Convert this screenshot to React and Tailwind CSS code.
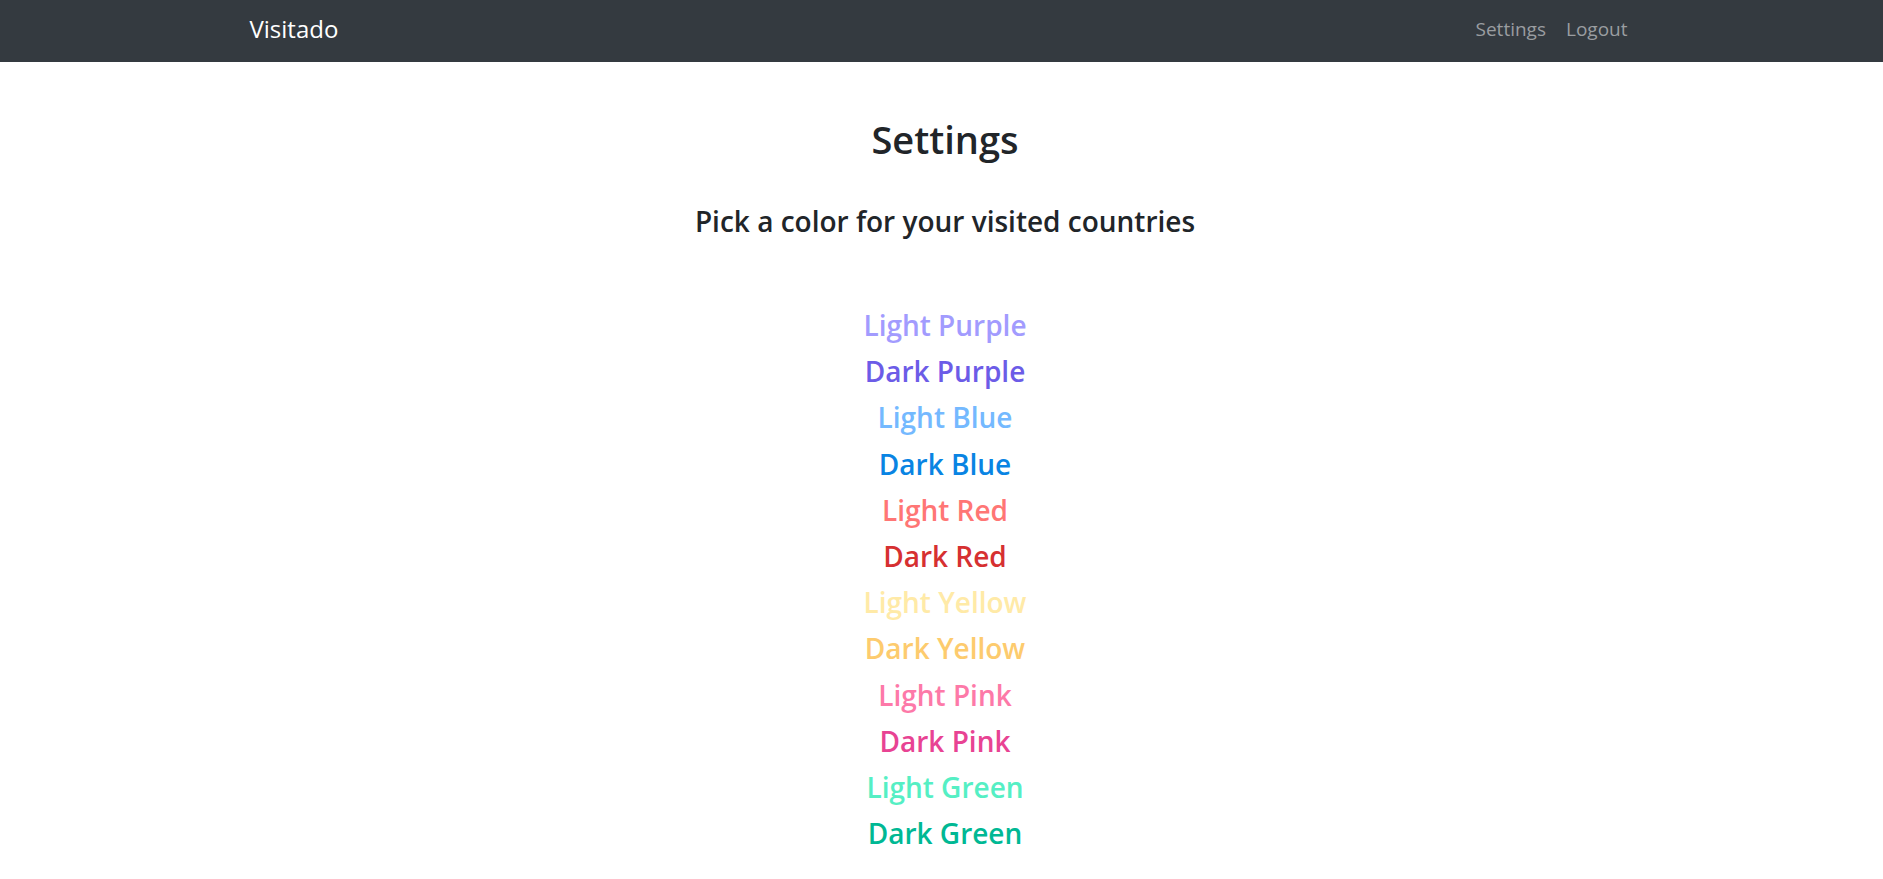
import React from "react";

const colors = [
  { name: "Light Purple", cls: "text-[#a29bfe]" },
  { name: "Dark Purple", cls: "text-[#6c5ce7]" },
  { name: "Light Blue", cls: "text-[#74b9ff]" },
  { name: "Dark Blue", cls: "text-[#0984e3]" },
  { name: "Light Red", cls: "text-[#ff7675]" },
  { name: "Dark Red", cls: "text-[#d63031]" },
  { name: "Light Yellow", cls: "text-[#ffeaa7]" },
  { name: "Dark Yellow", cls: "text-[#fdcb6e]" },
  { name: "Light Pink", cls: "text-[#fd79a8]" },
  { name: "Dark Pink", cls: "text-[#e84393]" },
  { name: "Light Green", cls: "text-[#55efc4]" },
  { name: "Dark Green", cls: "text-[#00b894]" },
];

export default function App() {
  return (
    <div className="min-h-screen bg-white font-['Open_Sans',_'Noto_Sans',_sans-serif] text-[#212529]">
      <nav className="h-[62px] bg-[#343a40]">
        <div className="mx-auto flex h-full w-[1386px] items-center justify-between pb-[5px]">
          <a className="ml-[1px] text-[24px] leading-[30px] text-white">Visitado</a>
          <div className="flex items-center">
            <a className="px-[10px] text-[19px] leading-[28px] text-[#9a9da0]">Settings</a>
            <a className="pl-[10px] pr-[7px] text-[19px] leading-[28px] text-[#9a9da0]">Logout</a>
          </div>
        </div>
      </nav>
      <main className="flex flex-col items-center pl-[7px] pt-[53px] text-center">
        <h1 className="text-[38px] font-semibold leading-[48px]">Settings</h1>
        <h4 className="mt-[40px] text-[28px] font-semibold leading-[36px]">
          Pick a color for your visited countries
        </h4>
        <ul className="mt-[63px] flex flex-col items-center">
          {colors.map((c) => (
            <li key={c.name}>
              <button className={`text-[28px] font-semibold leading-[46.2px] ${c.cls}`}>{c.name}</button>
            </li>
          ))}
        </ul>
      </main>
    </div>
  );
}
